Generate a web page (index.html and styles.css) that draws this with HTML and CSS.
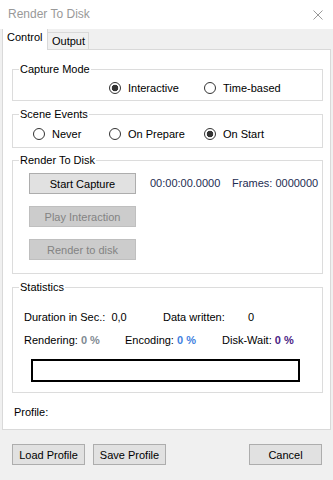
FILE: index.html
```html
<!DOCTYPE html>
<html lang="en">
<head>
    <meta charset="UTF-8">
    <title>Render To Disk</title>
    <link rel="stylesheet" href="styles.css">
</head>
<body>
    <div class="titlebar">
        <span class="title">Render To Disk</span>
        <svg class="close" width="10" height="10" viewBox="0 0 10 10">
            <path d="M0.5 0.5 L9.5 9.5 M9.5 0.5 L0.5 9.5" stroke="#999" stroke-width="1" fill="none"/>
        </svg>
    </div>

    <div class="tabs">
        <div class="tab active">Control</div>
        <div class="tab">Output</div>
    </div>

    <div class="tab-page">
        <fieldset class="group">
            <legend>Capture Mode</legend>
            <div class="radio-row capture-row">
                <span></span>
                <span class="radio checked">Interactive</span>
                <span class="radio">Time-based</span>
            </div>
        </fieldset>

        <fieldset class="group scene">
            <legend>Scene Events</legend>
            <div class="radio-row scene-row">
                <span class="radio">Never</span>
                <span class="radio">On Prepare</span>
                <span class="radio checked">On Start</span>
            </div>
        </fieldset>

        <fieldset class="group render">
            <legend>Render To Disk</legend>
            <div class="render-body">
                <div class="capture-line">
                    <button class="btn wide">Start Capture</button>
                    <span class="timer">00:00:00.0000</span>
                    <span class="frames">Frames: 0000000</span>
                </div>
                <button class="btn wide" disabled>Play Interaction</button>
                <button class="btn wide" disabled>Render to disk</button>
            </div>
        </fieldset>

        <fieldset class="group stats">
            <legend>Statistics</legend>
            <div class="stats-body">
                <div class="stat-row">
                    <span class="stat duration">Duration in Sec.:&nbsp; 0,0</span>
                    <span class="stat written"><span class="written-label">Data written:</span>0</span>
                </div>
                <div class="stat-row">
                    <span class="stat rendering">Rendering: <b class="pct pct-render">0 %</b></span>
                    <span class="stat encoding">Encoding: <b class="pct pct-encode">0 %</b></span>
                    <span class="stat">Disk-Wait: <b class="pct pct-disk">0 %</b></span>
                </div>
                <div class="progress"></div>
            </div>
        </fieldset>

        <div class="profile">Profile:</div>
    </div>

    <div class="footer">
        <button class="btn">Load Profile</button>
        <button class="btn">Save Profile</button>
        <button class="btn cancel">Cancel</button>
    </div>
</body>
</html>
```

FILE: styles.css
```css
body {
    margin: 0;
    width: 333px;
    height: 480px;
    background: #f0f0f0;
    font-family: "Liberation Sans", Arial, sans-serif;
    font-size: 11px;
    line-height: 13px;
    color: #000;
    overflow: hidden;
}

.titlebar {
    height: 29px;
    background: #fff;
    display: flex;
    align-items: center;
    justify-content: space-between;
    padding: 0 10px 0 8px;
}

.title {
    font-size: 12px;
    color: #999;
}

.close {
    display: block;
}

.tabs {
    display: flex;
    align-items: flex-end;
    height: 20px;
    padding-left: 2px;
}

.tab {
    height: 16px;
    padding: 0 3px 0 4px;
    border-top: 1px solid #d9d9d9;
    border-right: 1px solid #d9d9d9;
    line-height: 17px;
}

.tab.active {
    position: relative;
    z-index: 1;
    width: 39px;
    height: 21px;
    margin-bottom: -1px;
    padding: 0 1px 0 4px;
    border-top: none;
    border-left: 1px solid #d9d9d9;
    background: #fff;
    line-height: 17px;
}

.tab-page {
    margin: 0 2px;
    border: 1px solid #d9d9d9;
    background: #fff;
    padding: 13px 7px 10px 9px;
}

.group {
    margin: 0;
    padding: 0;
    border: 1px solid #dcdcdc;
    min-width: 0;
}

.group legend {
    margin-left: 6px;
    padding: 0 1px;
    line-height: 13px;
}

.scene,
.stats {
    margin-top: 7px;
}

.render {
    margin-top: 6px;
}

.radio-row {
    display: grid;
    grid-template-columns: 76px 95px auto;
    align-items: center;
    padding-left: 20px;
}

.capture-row {
    height: 24px;
}

.scene-row {
    height: 26px;
}

.radio {
    display: flex;
    align-items: center;
}

.radio::before {
    content: "";
    box-sizing: border-box;
    width: 12px;
    height: 12px;
    margin-right: 7px;
    border: 1px solid #333;
    border-radius: 50%;
    background: #fff;
}

.radio.checked::before {
    background: radial-gradient(circle, #333 0, #333 3px, #fff 3.6px);
}

.btn {
    box-sizing: border-box;
    width: 73px;
    height: 21px;
    padding: 0;
    border: 1px solid #adadad;
    background: #e1e1e1;
    font-family: "Liberation Sans", Arial, sans-serif;
    font-size: 11px;
    color: #000;
}

.btn:disabled {
    background: #cccccc;
    border-color: #bfbfbf;
    color: #838383;
}

.btn.wide {
    width: 107px;
}

.render-body {
    display: flex;
    flex-direction: column;
    align-items: flex-start;
    gap: 12px;
    padding: 6px 0 13px 16px;
}

.capture-line {
    display: flex;
    align-items: center;
}

.timer {
    width: 82px;
    margin-left: 14px;
    color: #1d2c52;
}

.frames {
    color: #1d2c52;
}

.stats-body {
    padding: 17px 0 10px 11px;
}

.stat-row {
    display: flex;
    height: 13px;
    margin-bottom: 10px;
}

.stat-row + .stat-row {
    margin-bottom: 12px;
}

.duration {
    width: 139px;
}

.written-label {
    display: inline-block;
    width: 85px;
}

.rendering {
    width: 101px;
}

.encoding {
    width: 97px;
}

.pct {
    font-weight: bold;
}

.pct-render {
    color: #7f8a93;
}

.pct-encode {
    color: #3f7fe0;
}

.pct-disk {
    color: #4b2485;
}

.progress {
    box-sizing: border-box;
    width: 269px;
    height: 23px;
    margin-left: 7px;
    border: 2px solid #000;
}

.profile {
    margin-top: 13px;
    padding-left: 2px;
}

.footer {
    display: flex;
    padding: 14px 11px 0 12px;
    gap: 8px;
}

.cancel {
    margin-left: auto;
}
```
